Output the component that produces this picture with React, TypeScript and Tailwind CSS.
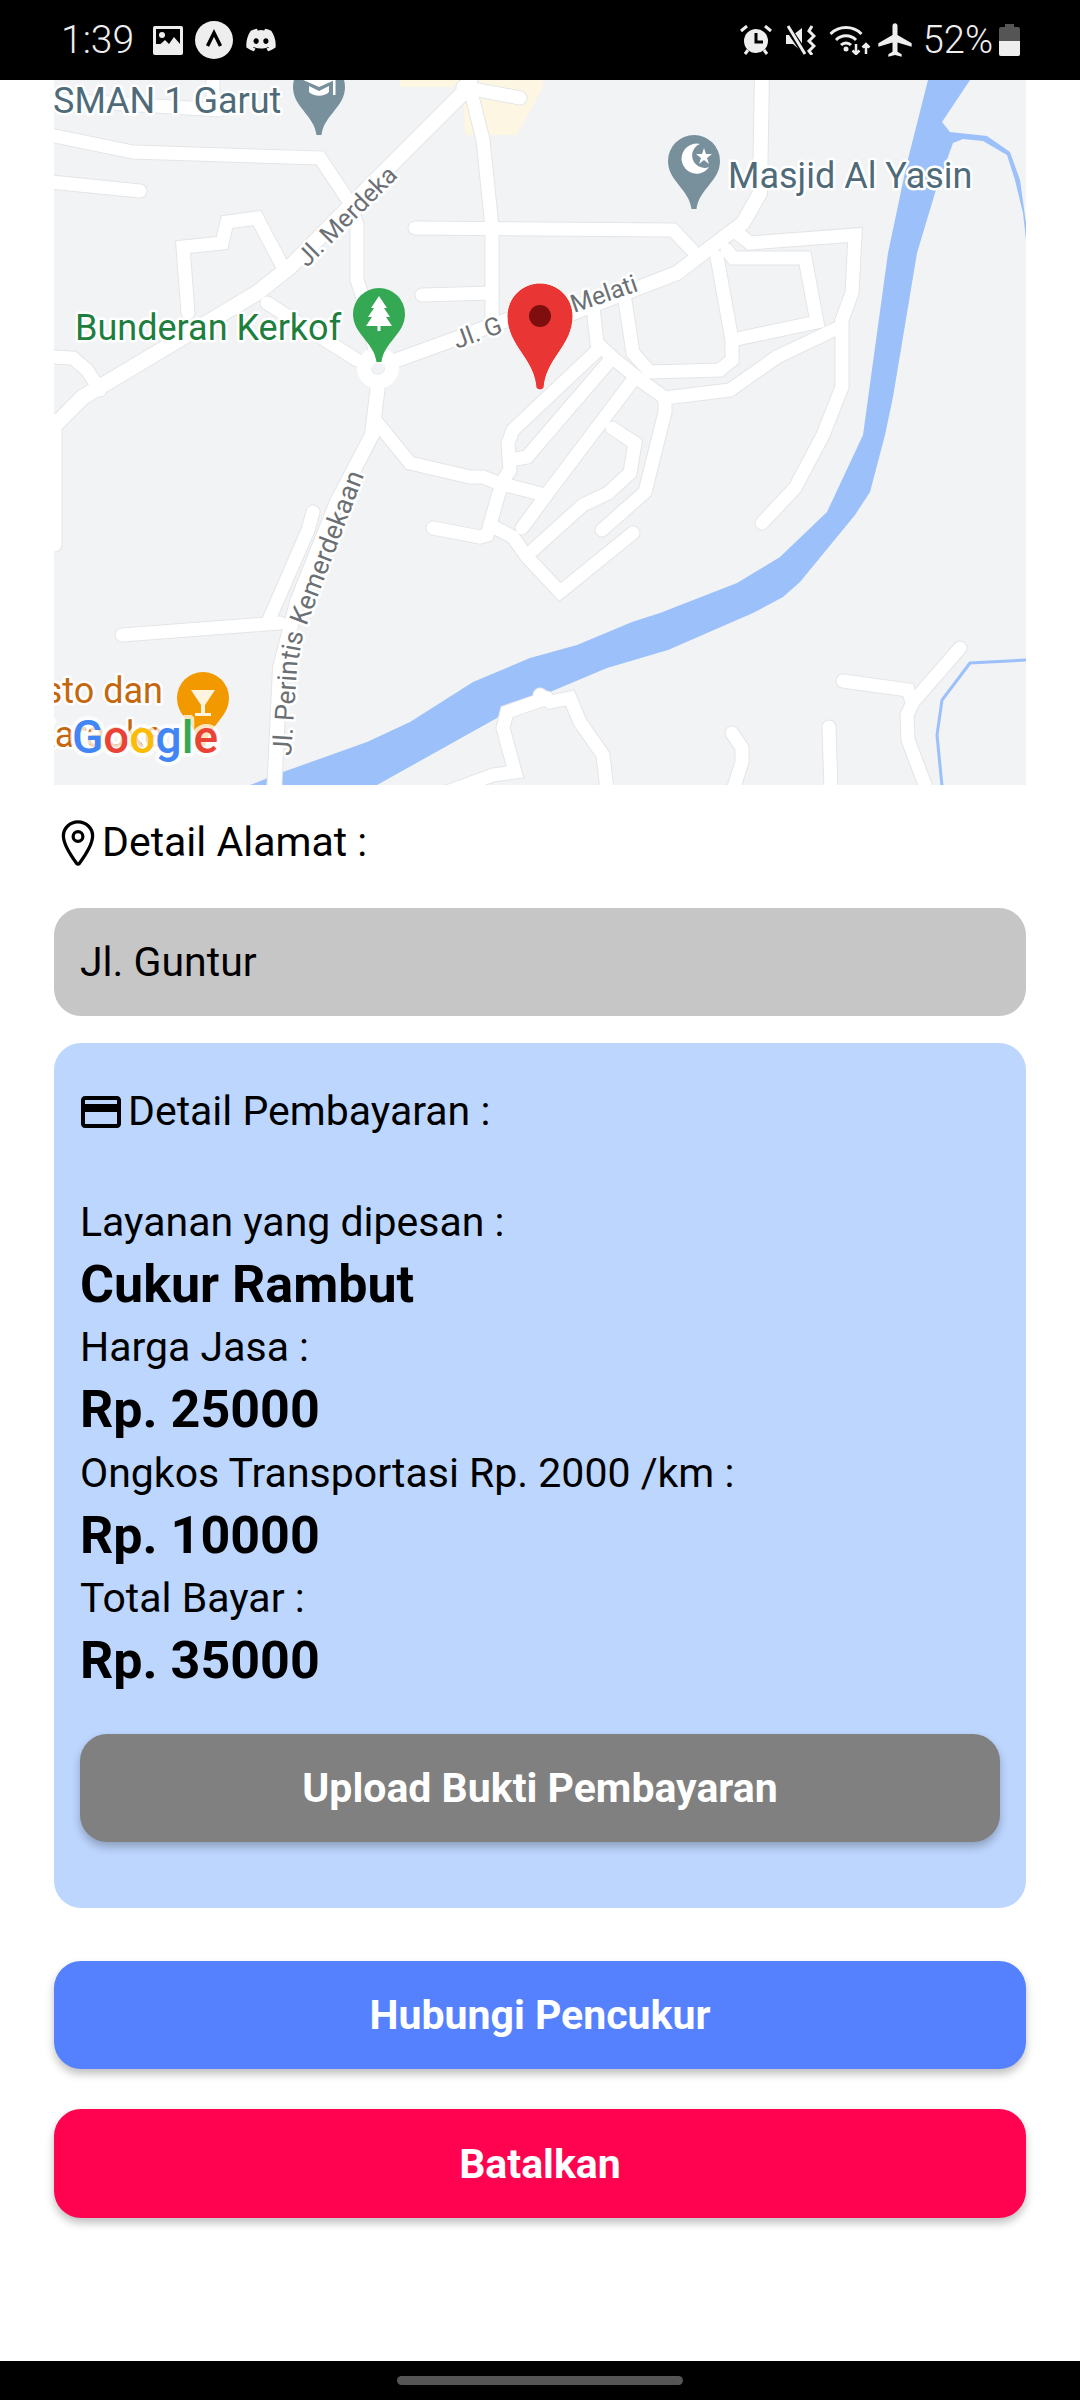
import { FaDiscord } from 'react-icons/fa';
import { IoLocationOutline } from 'react-icons/io5';
import { MdLocalAirport, MdOutlineCreditCard } from 'react-icons/md';

// road centre lines, in full screenshot coordinates
const roads: { p: string; w?: number }[] = [
  { p: '50,135 133,152 320,158 350,203 357,225 357,280 367,310 378,367', w: 13 },
  { p: '470,80 463,93 383,173 290,267 257,293 83,397 45,435', w: 15 },
  { p: '463,87 520,98' },
  { p: '473,100 483,140 492,227 492,320' },
  { p: '50,182 140,191' },
  { p: '283,267 257,218 227,222 222,243 183,247 188,313' },
  { p: '415,228 673,230 692,250' },
  { p: '422,295 492,293' },
  { p: '267,303 357,360' },
  { p: '397,360 507,320 573,313 677,273 707,250 743,223 760,193 762,70', w: 14 },
  { p: '378,385 372,435 337,502 297,602 280,668 274,795', w: 14 },
  { p: '313,512 308,530 268,622' },
  { p: '122,635 280,623' },
  { p: '375,420 410,463 470,477 483,477 498,483 545,495' },
  { p: '433,528 480,537 487,535 502,482 510,470 508,443 513,430 600,348' },
  { p: '510,460 527,457 612,358' },
  { p: '633,380 550,490 522,528' },
  { p: '490,525 513,537 527,557 560,592 633,533' },
  { p: '533,550 583,505 608,493 630,473 635,443 612,428' },
  { p: '602,530 645,492 665,412 665,398 640,380 613,358 597,343 593,307' },
  { p: '665,398 730,390 777,357 840,327' },
  { p: '842,320 842,387 823,435 795,488 762,523' },
  { p: '842,320 852,293 855,235 750,243 737,233' },
  { p: '717,257 732,340 732,360 720,370 650,372 633,353 625,300' },
  { p: '732,340 817,322 805,258 733,258 727,250' },
  { p: '540,695 550,702 570,698 580,722 603,755 607,790' },
  { p: '547,698 507,712 503,728 515,772 493,775 447,792' },
  { p: '732,733 742,748 742,762 733,790' },
  { p: '829,727 831,790' },
  { p: '843,681 908,690 912,702' },
  { p: '960,648 913,702 907,715 908,740 927,790' },
  { p: '54,357 73,358 87,370 100,390' },
  { p: '60,100 220,110' },
  { p: '213,80 213,105' },
  { p: '55,420 55,545' },
];

function Pin({ cx, cy, fill, children }: { cx: number; cy: number; fill: string; children?: React.ReactNode }) {
  return (
    <g transform={`translate(${cx} ${cy})`}>
      <path
        d="M-26 0A26 26 0 1 1 26 0C26 20 5 28 2.500 48H-2.500C-5 28 -26 20 -26 0Z"
        fill={fill}
      />
      {children}
    </g>
  );
}

function MapView() {
  const halo = { stroke: '#ffffff', strokeWidth: 5, paintOrder: 'stroke' as const, strokeLinejoin: 'round' as const };
  return (
    <svg viewBox="54 80 972 705" className="block h-full w-full font-['Roboto',sans-serif]">
      <rect x="54" y="80" width="972" height="705" fill="#f2f3f5" />
      <polygon points="400,80 543,80 543,87 517,135 465,135 463,87 400,87" fill="#fdf6e3" />
      {/* river and its branch */}
      <polygon
        fill="#9cc0f9"
        points="928,80 970,80 942,122 950,132 987,136 1010,152 1020,180 1026,223 1026,240 1023,213 1015,180 1007,155 983,141 963,139 953,143 935,193 917,253 893,397 885,435 870,492 855,515 800,582 783,597 753,613 668,650 607,668 550,692 510,703 497,718 377,785 250,785 283,772 367,742 410,722 473,682 530,658 577,645 632,622 660,613 737,583 780,557 827,512 863,435 888,253 907,163"
      />
      <polyline points="1026,660 970,663 942,700 937,735 942,786" fill="none" stroke="#9cc0f9" strokeWidth="3" />
      {roads.map((r, i) => (
        <polyline key={i} points={r.p} fill="none" stroke="#e3e5e8" strokeWidth={(r.w ?? 13) + 2} strokeLinecap="round" />
      ))}
      {roads.map((r, i) => (
        <polyline key={i} points={r.p} fill="none" stroke="#ffffff" strokeWidth={r.w ?? 13} strokeLinecap="round" />
      ))}
      <circle cx="378" cy="368" r="14" fill="none" stroke="#ffffff" strokeWidth="14" />
      <circle cx="378" cy="368" r="6" fill="#f2f3f5" />

      {/* street names */}
      <g fill="#6b7075" fontSize="25" {...halo}>
        <text transform="translate(307 268) rotate(-45)">Jl. Merdeka</text>
        <text transform="translate(457 349) rotate(-20)">Jl. G</text>
        <text transform="translate(574 313) rotate(-19)">Melati</text>
        <path id="perintis" d="M291 756L297 668L303 635L363 478" fill="none" stroke="none" />
        <text fontSize="26.500">
          <textPath href="#perintis">Jl. Perintis Kemerdekaan</textPath>
        </text>
      </g>

      {/* place names */}
      <g fontSize="36" {...halo}>
        <text x="53" y="113" fill="#4f6b7a">SMAN 1 Garut</text>
        <text x="728" y="188" fill="#4f6b7a">Masjid Al Yasin</text>
        <text x="75" y="340" fill="#1e7e3e">Bunderan Kerkof</text>
        <text x="163" y="703" textAnchor="end" fill="#c5670d">sto dan</text>
        <text x="163" y="747" textAnchor="end" fill="#c5670d">Karaoke</text>
      </g>

      <Pin cx={319} cy={87} fill="#78909c">
        <polygon points="-18,-8 0,-16 18,-8 0,0" fill="#ffffff" />
        <path d="M-10 -1V5C-5 10 5 10 10 5V-1L0 4Z" fill="#ffffff" />
        <rect x="14" y="-8" width="2.500" height="16" fill="#ffffff" />
      </Pin>
      <Pin cx={694} cy={161} fill="#78909c">
        <path d="M6 -17A15 15 0 1 0 15 6A12 12 0 1 1 6 -17Z" fill="#ffffff" />
        <polygon points="10,-13 12,-7 18,-7 13,-3 15,3 10,-1 5,3 7,-3 2,-7 8,-7" fill="#ffffff" />
      </Pin>
      <Pin cx={379} cy={314} fill="#34a853">
        <polygon points="0,-18 8,-6 5,-6 11,3 7,3 13,12 -13,12 -7,3 -11,3 -5,-6 -8,-6" fill="#ffffff" />
        <rect x="-1.500" y="11" width="3" height="6" fill="#ffffff" />
      </Pin>
      <Pin cx={203} cy={698} fill="#f29900">
        <path d="M-12 -8H12L2 7V15H8V18H-8V15H-2V7Z" fill="#fdf3df" />
      </Pin>

      {/* the marker */}
      <path
        d="M540 283C558 283 573 298 573 316C573 346 546 358 544 388Q540 392 536 388C534 358 507 346 507 316C507 298 522 283 540 283Z"
        fill="#ea3535"
        stroke="#ffffff"
        strokeWidth="1"
      />
      <circle cx="540" cy="316" r="11" fill="#7f0f0f" />

      <text
        x="72"
        y="753"
        fontSize="46"
        fontWeight="500"
        stroke="#ffffff"
        strokeOpacity="0.75"
        strokeWidth="8"
        paintOrder="stroke"
        strokeLinejoin="round"
      >
        <tspan fill="#4285f4">G</tspan>
        <tspan fill="#ea4335">o</tspan>
        <tspan fill="#fbbc05">o</tspan>
        <tspan fill="#4285f4">g</tspan>
        <tspan fill="#34a853">l</tspan>
        <tspan fill="#ea4335">e</tspan>
      </text>
    </svg>
  );
}

function StatusBar() {
  return (
    <div className="flex h-20 shrink-0 items-center justify-between bg-black pl-[61px] pr-[60px] text-[#eeeeee]">
      <div className="flex items-center">
        <span className="text-[39px] font-light leading-none">1:39</span>
        <svg viewBox="0 0 30 29" className="ml-[19px] h-[29px] w-[30px]">
          <rect width="30" height="29" rx="2" fill="#eeeeee" />
          <rect x="3" y="3" width="24" height="15" fill="#000000" />
          <circle cx="9" cy="9" r="3" fill="#eeeeee" />
          <polygon points="3,22 12,14 16,18 21,11 27,18 27,24 3,24" fill="#eeeeee" />
        </svg>
        <svg viewBox="0 0 38 38" className="ml-3 h-[38px] w-[38px]">
          <circle cx="19" cy="19" r="19" fill="#eeeeee" />
          <path d="M12.500 25L19 12L25.500 25" fill="none" stroke="#000000" strokeWidth="3.500" />
        </svg>
        <FaDiscord className="ml-[12px] h-[34px] w-[32px]" />
      </div>
      <div className="flex items-center">
        <svg viewBox="0 0 32 30" className="h-[30px] w-8">
          <circle cx="16" cy="16" r="12" fill="#eeeeee" />
          <path d="M16 8V17H23" fill="none" stroke="#000000" strokeWidth="3" />
          <path d="M1 6L7 1M31 6L25 1M5 29L8 25M27 29L24 25" fill="none" stroke="#eeeeee" strokeWidth="3" />
        </svg>
        <svg viewBox="0 0 30 30" className="ml-[14px] h-[30px] w-[30px]">
          <polygon points="0,10 7,10 16,3 16,27 7,19 0,19" fill="#eeeeee" />
          <path d="M0 0L20 30" stroke="#000000" strokeWidth="6" />
          <path d="M2 1L19 29" stroke="#eeeeee" strokeWidth="3" />
          <path d="M26 1L23 6L28 11L23 16L28 21L23 26L26 30" fill="none" stroke="#eeeeee" strokeWidth="3" />
        </svg>
        <svg viewBox="0 0 42 30" className="ml-[13px] h-[30px] w-[42px]">
          <g fill="none" stroke="#eeeeee" strokeWidth="3">
            <path d="M1.500 9A22 22 0 0 1 32.500 9" />
            <path d="M7 15A14 14 0 0 1 27 15" />
            <path d="M12 20A7 7 0 0 1 22 20" />
          </g>
          <circle cx="17" cy="24" r="2.500" fill="#eeeeee" />
          <path d="M27 19V29M23.500 25.500L27 29L30.500 25.500M37 29V19M33.500 22.500L37 19L40.500 22.500" fill="none" stroke="#eeeeee" strokeWidth="2.500" />
        </svg>
        <MdLocalAirport className="ml-[4px] h-[40px] w-[40px]" />
        <span className="ml-[8px] text-[38px] font-light leading-none">52%</span>
        <svg viewBox="0 0 21 32" className="ml-[6px] h-8 w-[21px]">
          <path d="M6 0H15V3H19Q21 3 21 5V30Q21 32 19 32H2Q0 32 0 30V5Q0 3 2 3H6Z" fill="#555555" />
          <path d="M0 17H21V30Q21 32 19 32H2Q0 32 0 30Z" fill="#eeeeee" />
        </svg>
      </div>
    </div>
  );
}

function InfoRow({ label, value }: { label: string; value: string }) {
  return (
    <>
      <p className="text-[41px] leading-[62.7px]">{label}</p>
      <p className="text-[52px] font-bold leading-[62.7px]">{value}</p>
    </>
  );
}

export default function App() {
  return (
    <div className="flex h-[2400px] flex-col overflow-hidden bg-white font-['Roboto',sans-serif] text-black">
      <StatusBar />
      <div className="flex flex-1 flex-col px-[54px]">
        <div className="h-[705px] shrink-0">
          <MapView />
        </div>

        <div className="mt-[30px] flex h-[56px] items-center">
          <IoLocationOutline className="-ml-[2px] h-[52px] w-[52px] shrink-0" />
          <span className="-ml-[2px] text-[41px]">Detail Alamat :</span>
        </div>

        <div className="mt-[37px] flex h-[108px] items-center rounded-[27px] bg-[#c6c6c6] px-[26px] pt-[2px] text-[41px]">
          Jl. Guntur
        </div>

        <div className="mt-[27px] h-[865px] rounded-[27px] bg-[#bdd6fe] px-[26px] pt-[41px]">
          <div className="flex h-[56px] items-center">
            <MdOutlineCreditCard className="-ml-[3px] h-12 w-12 shrink-0" />
            <span className="ml-[3px] text-[41px]">Detail Pembayaran :</span>
          </div>
          <div className="mt-[51px]">
            <InfoRow label="Layanan yang dipesan :" value="Cukur Rambut" />
            <InfoRow label="Harga Jasa :" value="Rp. 25000" />
            <InfoRow label="Ongkos Transportasi Rp. 2000 /km :" value="Rp. 10000" />
            <InfoRow label="Total Bayar :" value="Rp. 35000" />
          </div>
          <button className="mt-[41px] flex h-[108px] w-full items-center justify-center rounded-[27px] bg-[#808080] pt-[2px] text-[41px] font-bold text-white shadow-[0_5px_8px_rgba(0,0,0,0.25)]">
            Upload Bukti Pembayaran
          </button>
        </div>

        <button className="mt-[53px] flex h-[108px] w-full items-center justify-center rounded-[27px] bg-[#5581ff] pt-[2px] text-[41px] font-bold text-white shadow-[0_5px_8px_rgba(0,0,0,0.25)]">
          Hubungi Pencukur
        </button>
        <button className="mt-[40px] flex h-[109px] w-full items-center justify-center rounded-[27px] bg-[#ff0350] pt-[2px] text-[41px] font-bold text-white shadow-[0_5px_8px_rgba(0,0,0,0.25)]">
          Batalkan
        </button>
      </div>

      <div className="flex h-[39px] shrink-0 items-center justify-center bg-black">
        <div className="h-[9px] w-[286px] rounded-full bg-[#555555]" />
      </div>
    </div>
  );
}
